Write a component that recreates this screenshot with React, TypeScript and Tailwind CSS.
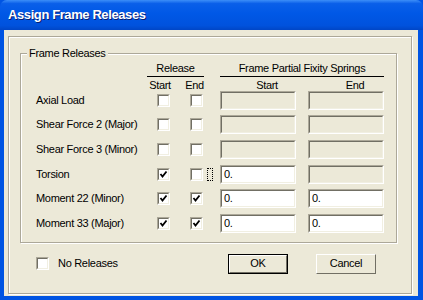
import React from 'react';

const font = "font-['Liberation_Sans',Arial,sans-serif]";

const CheckMark = () => (
  <svg width="9" height="9" viewBox="0 0 9 9" className="block">
    <path d="M1.5 4 L3.5 6.5 L7.5 1.5" fill="none" stroke="#000" strokeWidth="1.8" />
  </svg>
);

// sunken checkbox, classic style
const Box = ({ checked }: { checked?: boolean }) => (
  <div className="shrink-0 w-[13px] h-[13px] border-t border-l border-[#aca899] border-b border-r border-b-white border-r-white">
    <div className="w-full h-full border-t border-l border-[#716f64] border-b border-r border-b-[#f1efe2] border-r-[#f1efe2] bg-white flex items-center justify-center">
      {checked && <CheckMark />}
    </div>
  </div>
);

const Field = ({ value, enabled }: { value?: string; enabled?: boolean }) => (
  <div className="shrink-0 w-[76px] h-[19px] border-t border-l border-[#aca899] border-b border-r border-b-white border-r-white">
    <div
      className={`w-full h-full border-t border-l border-[#716f64] border-b border-r border-b-[#f1efe2] border-r-[#f1efe2] px-[2px] leading-[15px] ${
        enabled ? 'bg-white' : 'bg-[#ece9d8]'
      }`}
    >
      {value}
    </div>
  </div>
);

const rows = [
  { label: 'Axial Load', s: false, e: false },
  { label: 'Shear Force 2 (Major)', s: false, e: false },
  { label: 'Shear Force 3 (Minor)', s: false, e: false },
  { label: 'Torsion', s: true, e: false, focus: true, sv: '0.' },
  { label: 'Moment 22 (Minor)', s: true, e: true, sv: '0.', ev: '0.' },
  { label: 'Moment 33 (Major)', s: true, e: true, sv: '0.', ev: '0.' },
];

const Button = ({ children, primary }: { children: React.ReactNode; primary?: boolean }) => (
  <div className={`shrink-0 w-[60px] h-[20px] ${primary ? 'border border-black' : ''}`}>
    <div className="w-full h-full border-t border-l border-white border-b border-r border-b-[#716f64] border-r-[#716f64] flex items-center justify-center">
      {children}
    </div>
  </div>
);

export default function App() {
  return (
    <div className={`w-[423px] h-[300px] flex flex-col bg-[#0054e3] ${font} text-[11px] tracking-[-0.3px] text-black`}>
      {/* Title bar */}
      <div className="h-[30px] shrink-0 rounded-t-[7px] bg-[linear-gradient(180deg,#3c8ef8_0%,#0a5fe9_12%,#0058e6_45%,#0052dd_85%,#0046c6_100%)] flex items-center pl-[8px]">
        <span className="text-white font-bold text-[13px] tracking-[-0.4px] [text-shadow:1px_1px_0_#0a1e72]">
          Assign Frame Releases
        </span>
      </div>

      {/* Body */}
      <div className="flex-1 mb-[4px] ml-[4px] mr-[5px] bg-[#ece9d8] pt-[6px] pl-[4px] pr-[6px] pb-[2px] flex">
        <div className="flex-1 border border-[#aca899] shadow-[inset_1px_1px_0_#fff,1px_1px_0_#fff] pt-[16px] pl-[11px] pr-[14px] flex flex-col">
          {/* group box */}
          <div className="relative h-[190px] shrink-0 border border-[#aca899] shadow-[inset_1px_1px_0_#fff,1px_1px_0_#fff]">
            <span className="absolute left-[6px] top-[-8px] bg-[#ece9d8] px-[2px] leading-[14px]">Frame Releases</span>

            <div className="flex mt-[8px] leading-[13px]">
              <div className="ml-[126px] w-[57px] text-center border-b border-black pb-[1px]">Release</div>
              <div className="ml-[16px] w-[164px] text-center border-b border-black pb-[1px]">Frame Partial Fixity Springs</div>
            </div>
            <div className="flex mt-[2px] leading-[13px]">
              <div className="ml-[127px] w-[24px] text-center">Start</div>
              <div className="ml-[13px] w-[19px] text-center">End</div>
              <div className="ml-[25px] w-[76px] text-center">Start</div>
              <div className="ml-[12px] w-[76px] text-center">End</div>
            </div>

            <div className="-mt-[4px] flex flex-col">
              {rows.map((r) => (
                <div key={r.label} className="flex items-center h-[24.6px] pl-[15px]">
                  <div className="w-[121px] leading-[13px] whitespace-nowrap">{r.label}</div>
                  <div className="w-[33px]">
                    <Box checked={r.s} />
                  </div>
                  <div className="w-[30px] flex items-center">
                    <Box checked={r.e} />
                    {r.focus && <div className="ml-[4px] w-[6px] h-[13px] border border-dotted border-black" />}
                  </div>
                  <Field value={r.sv} enabled={!!r.sv} />
                  <div className="ml-[12px]">
                    <Field value={r.ev} enabled={!!r.ev} />
                  </div>
                </div>
              ))}
            </div>
          </div>

          {/* footer */}
          <div className="flex items-center mt-[10px] h-[21px] whitespace-nowrap">
            <div className="ml-[16px]">
              <Box />
            </div>
            <span className="ml-[9px] w-[60px]">No Releases</span>
            <div className="ml-[110px]">
              <Button primary>OK</Button>
            </div>
            <div className="ml-[28px]">
              <Button>Cancel</Button>
            </div>
          </div>
        </div>
      </div>
    </div>
  );
}
